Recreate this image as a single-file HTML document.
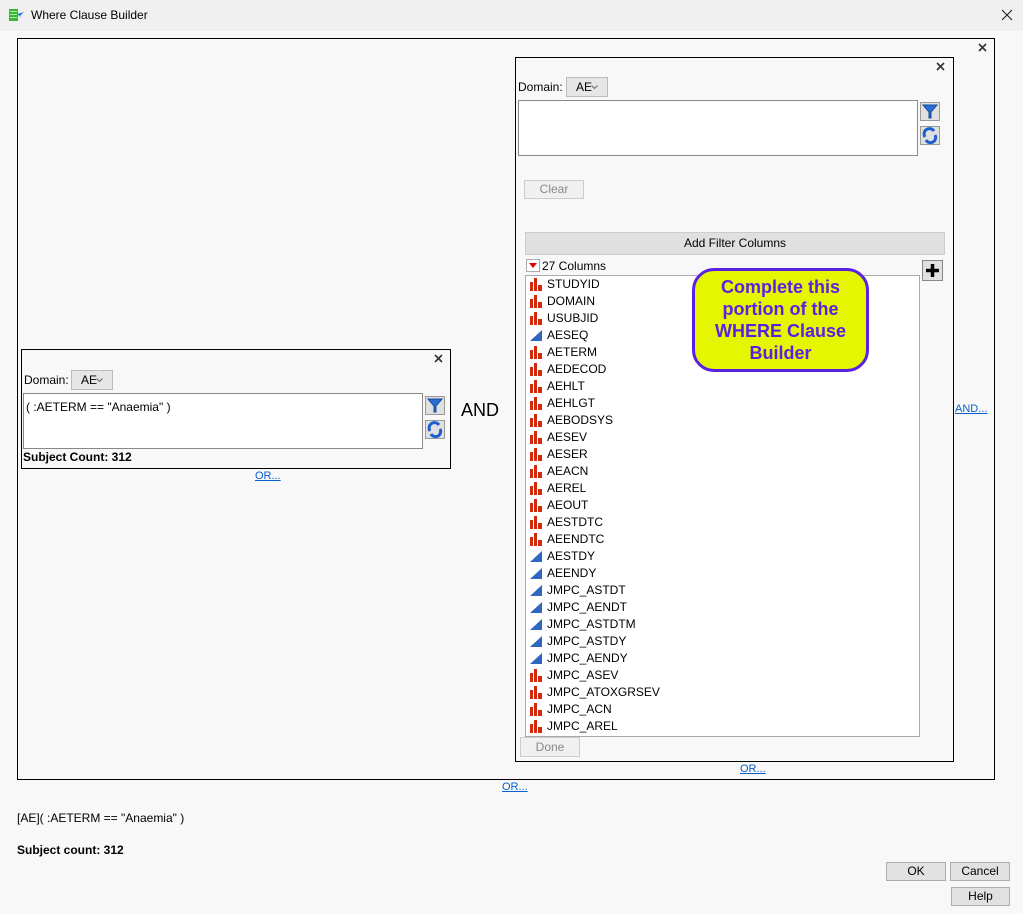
<!DOCTYPE html>
<html><head><meta charset="utf-8"><style>
*{box-sizing:border-box;margin:0;padding:0}
body{width:1023px;height:914px;background:#f8f8f8;font-family:"Liberation Sans",sans-serif;font-size:12px;color:#000;position:relative;overflow:hidden}
.a{position:absolute}
.box{position:absolute;border:1px solid #000}
.btn{position:absolute;background:#e1e1e1;border:1px solid #adadad;text-align:center;font-size:12px}
.dis{background:#f0f0f0;border:1px solid #ccc;color:#888}
.lnk{position:absolute;color:#0a5fcf;text-decoration:underline;font-size:11px}
.x{position:absolute;width:10px;height:10px}
.row{position:absolute;left:530px;height:17px;line-height:17px;font-size:12px}
.row svg{position:absolute;left:0;top:2px}
.row span{position:absolute;left:17px;white-space:nowrap}
.ib{position:absolute;width:20px;height:19px;background:#e0e0e0;border:1px solid #999}
.dd{position:absolute;height:20px;background:#e6e6e6;border:1px solid #bbb;line-height:18px;padding-left:9px;font-size:12px}
.dd svg{position:absolute;right:9px;top:7px}
</style></head><body>
<div class="a" style="left:0;top:0;width:1023px;height:31px;background:#f0f0f0"></div>
<svg class="a" style="left:9px;top:8px" width="16" height="14"><rect x="0" y="1" width="9" height="12" fill="#3db33d"/><rect x="1" y="3" width="7" height="1" fill="#9f9"/><rect x="1" y="6" width="7" height="1" fill="#9f9"/><rect x="1" y="9" width="7" height="1" fill="#9f9"/><path d="M8 6 L15 4 L11 8 L14 11 Z" fill="#1e7fd0"/></svg>
<div class="a" style="left:31px;top:8px;font-size:12px">Where Clause Builder</div>
<svg class="a" style="left:1001px;top:9px" width="12" height="12"><path d="M1 1 L11 11 M11 1 L1 11" stroke="#222" stroke-width="1.1"/></svg>

<div class="box" style="left:17px;top:38px;width:978px;height:742px"></div>
<svg class="x" style="left:978px;top:43px"><path d="M1 1 L8 8 M8 1 L1 8" stroke="#333" stroke-width="1.6"/></svg>

<!-- left panel -->
<div class="box" style="left:21px;top:349px;width:430px;height:120px"></div>
<svg class="x" style="left:434px;top:354px"><path d="M1 1 L8 8 M8 1 L1 8" stroke="#333" stroke-width="1.6"/></svg>
<div class="a" style="left:24px;top:373px">Domain:</div>
<div class="dd" style="left:71px;top:370px;width:42px">AE<svg width="7" height="5"><path d="M0.5 0.5 L3.5 3.5 L6.5 0.5" stroke="#666" fill="none"/></svg></div>
<div class="a" style="left:23px;top:393px;width:400px;height:56px;background:#fff;border:1px solid #888"></div>
<div class="a" style="left:26px;top:400px">( :AETERM == "Anaemia" )</div>
<div class="ib" style="left:425px;top:396px"><svg width="18" height="17"><path d="M2 2 H16 L10 9 V15 H8 V9 Z" fill="#2a6fd6" stroke="#124a99"/></svg></div>
<div class="ib" style="left:425px;top:420px"><svg width="18" height="17"><path d="M4 10 A5 5 0 0 1 13 4" stroke="#1a5fcc" stroke-width="3" fill="none"/><path d="M14 8 A5 5 0 0 1 5 13" stroke="#1a5fcc" stroke-width="3" fill="none"/></svg></div>
<div class="a" style="left:23px;top:450px;font-weight:bold">Subject Count: 312</div>
<div class="lnk" style="left:255px;top:470px">OR...</div>

<div class="a" style="left:461px;top:400px;font-size:18px">AND</div>

<!-- right panel -->
<div class="box" style="left:515px;top:57px;width:439px;height:705px"></div>
<svg class="x" style="left:936px;top:62px"><path d="M1 1 L8 8 M8 1 L1 8" stroke="#333" stroke-width="1.6"/></svg>
<div class="a" style="left:518px;top:80px">Domain:</div>
<div class="dd" style="left:566px;top:77px;width:42px">AE<svg width="7" height="5"><path d="M0.5 0.5 L3.5 3.5 L6.5 0.5" stroke="#666" fill="none"/></svg></div>
<div class="a" style="left:518px;top:100px;width:400px;height:56px;background:#fff;border:1px solid #888"></div>
<div class="ib" style="left:920px;top:102px"><svg width="18" height="17"><path d="M2 2 H16 L10 9 V15 H8 V9 Z" fill="#2a6fd6" stroke="#124a99"/></svg></div>
<div class="ib" style="left:920px;top:126px"><svg width="18" height="17"><path d="M4 10 A5 5 0 0 1 13 4" stroke="#1a5fcc" stroke-width="3" fill="none"/><path d="M14 8 A5 5 0 0 1 5 13" stroke="#1a5fcc" stroke-width="3" fill="none"/></svg></div>
<div class="btn dis" style="left:524px;top:180px;width:60px;height:19px;line-height:17px">Clear</div>
<div class="btn" style="left:525px;top:232px;width:420px;height:23px;line-height:21px;background:#e0e0e0;border-color:#ccc">Add Filter Columns</div>
<div class="a" style="left:526px;top:259px;width:14px;height:13px;border:1px solid #aaa;background:#fff"><svg width="12" height="11"><path d="M2 3 H10 L6 8 Z" fill="#d00"/></svg></div>
<div class="a" style="left:542px;top:259px">27 Columns</div>
<div class="a" style="left:922px;top:260px;width:21px;height:21px;border:1px solid #888;background:#e0e0e0"><svg width="19" height="19"><path d="M9.5 3 V16 M3 9.5 H16" stroke="#000" stroke-width="3.5"/></svg></div>
<div class="a" style="left:525px;top:275px;width:395px;height:462px;background:#fff;border:1px solid #aaa"></div>
<div id="list"></div>
<div class="btn dis" style="left:520px;top:737px;width:60px;height:20px;line-height:18px">Done</div>
<div class="lnk" style="left:740px;top:763px">OR...</div>
<div class="lnk" style="left:955px;top:403px">AND...</div>

<div class="a" style="left:692px;top:268px;width:177px;height:104px;background:#e6f500;border:3px solid #5b21e0;border-radius:22px;color:#5b21e0;font-weight:bold;font-size:18px;line-height:22px;text-align:center;padding-top:5px">Complete this<br>portion of the<br>WHERE Clause<br>Builder</div>

<div class="lnk" style="left:502px;top:781px">OR...</div>
<div class="a" style="left:17px;top:811px;font-size:12px">[AE]( :AETERM == "Anaemia" )</div>
<div class="a" style="left:17px;top:843px;font-size:12px;font-weight:bold">Subject count: 312</div>
<div class="btn" style="left:886px;top:862px;width:60px;height:19px;line-height:17px">OK</div>
<div class="btn" style="left:950px;top:862px;width:60px;height:19px;line-height:17px">Cancel</div>
<div class="btn" style="left:951px;top:887px;width:59px;height:19px;line-height:17px">Help</div>

<script>
var items=[["STUDYID",0],["DOMAIN",0],["USUBJID",0],["AESEQ",1],["AETERM",0],["AEDECOD",0],["AEHLT",0],["AEHLGT",0],["AEBODSYS",0],["AESEV",0],["AESER",0],["AEACN",0],["AEREL",0],["AEOUT",0],["AESTDTC",0],["AEENDTC",0],["AESTDY",1],["AEENDY",1],["JMPC_ASTDT",1],["JMPC_AENDT",1],["JMPC_ASTDTM",1],["JMPC_ASTDY",1],["JMPC_AENDY",1],["JMPC_ASEV",0],["JMPC_ATOXGRSEV",0],["JMPC_ACN",0],["JMPC_AREL",0]];
var bar='<svg width="13" height="13"><rect x="0" y="4" width="3" height="9" fill="#d42a0c"/><rect x="4" y="0" width="3" height="13" fill="#d42a0c"/><rect x="8" y="7" width="4" height="6" fill="#d42a0c"/></svg>';
var tri='<svg width="13" height="13"><path d="M0 12 L12 1 V12 Z" fill="#2e66c0"/></svg>';
var h='';
items.forEach(function(it,i){h+='<div class="row" style="top:'+(276+i*17)+'px">'+(it[1]?tri:bar)+'<span>'+it[0]+'</span></div>';});
document.getElementById('list').innerHTML=h;
</script>
</body></html>
